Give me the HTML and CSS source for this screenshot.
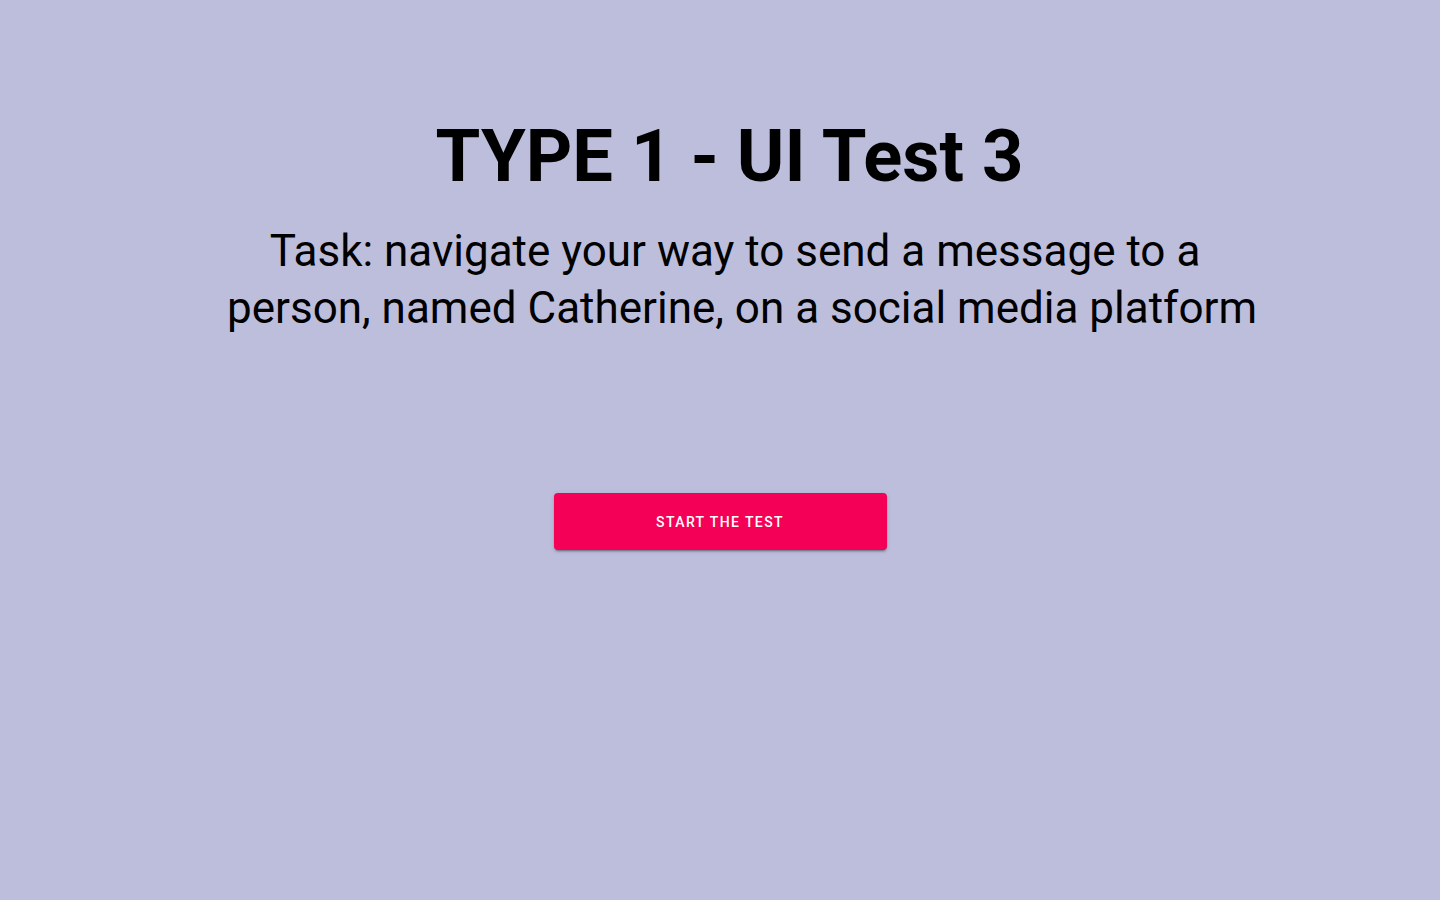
FILE: index.html
```html
<!DOCTYPE html>
<html>
<head>
<meta charset="utf-8">
<link rel="stylesheet" href="styles.css">
</head>
<body>
<main class="page">
  <h1 class="title">TYPE 1 - UI Test 3</h1>
  <p class="task">Task: navigate your way to send a message to a person, named Catherine, on a social media platform</p>
  <button class="start">Start the test</button>
</main>
</body>
</html>
```

FILE: styles.css
```css
html, body {
  margin: 0;
  padding: 0;
  height: 100%;
}
body {
  background: #bdbedb;
  font-family: Roboto, "Noto Sans", sans-serif;
  color: #000;
}
.page {
  display: flex;
  flex-direction: column;
  align-items: center;
  padding-top: 115px;
}
.title {
  margin: 0;
  padding-left: 19px;
  font-size: 72.3px;
  font-weight: 700;
  line-height: 84px;
}
.task {
  margin: 24px 0 0;
  box-sizing: content-box;
  width: 1060px;
  padding-left: 44px;
  text-indent: -14px;
  text-align: center;
  font-size: 44px;
  font-weight: 400;
  line-height: 57px;
}
.start {
  margin-top: 156px;
  width: 333px;
  height: 57px;
  border: none;
  border-radius: 4px;
  background: #f50057;
  color: #fff;
  font-family: Roboto, sans-serif;
  font-weight: 500;
  font-size: 14px;
  letter-spacing: 0.1em;
  text-transform: uppercase;
  box-shadow: 0 3px 1px -2px rgba(0,0,0,0.2), 0 2px 2px 0 rgba(0,0,0,0.14), 0 1px 5px 0 rgba(0,0,0,0.12);
  cursor: pointer;
}
```
